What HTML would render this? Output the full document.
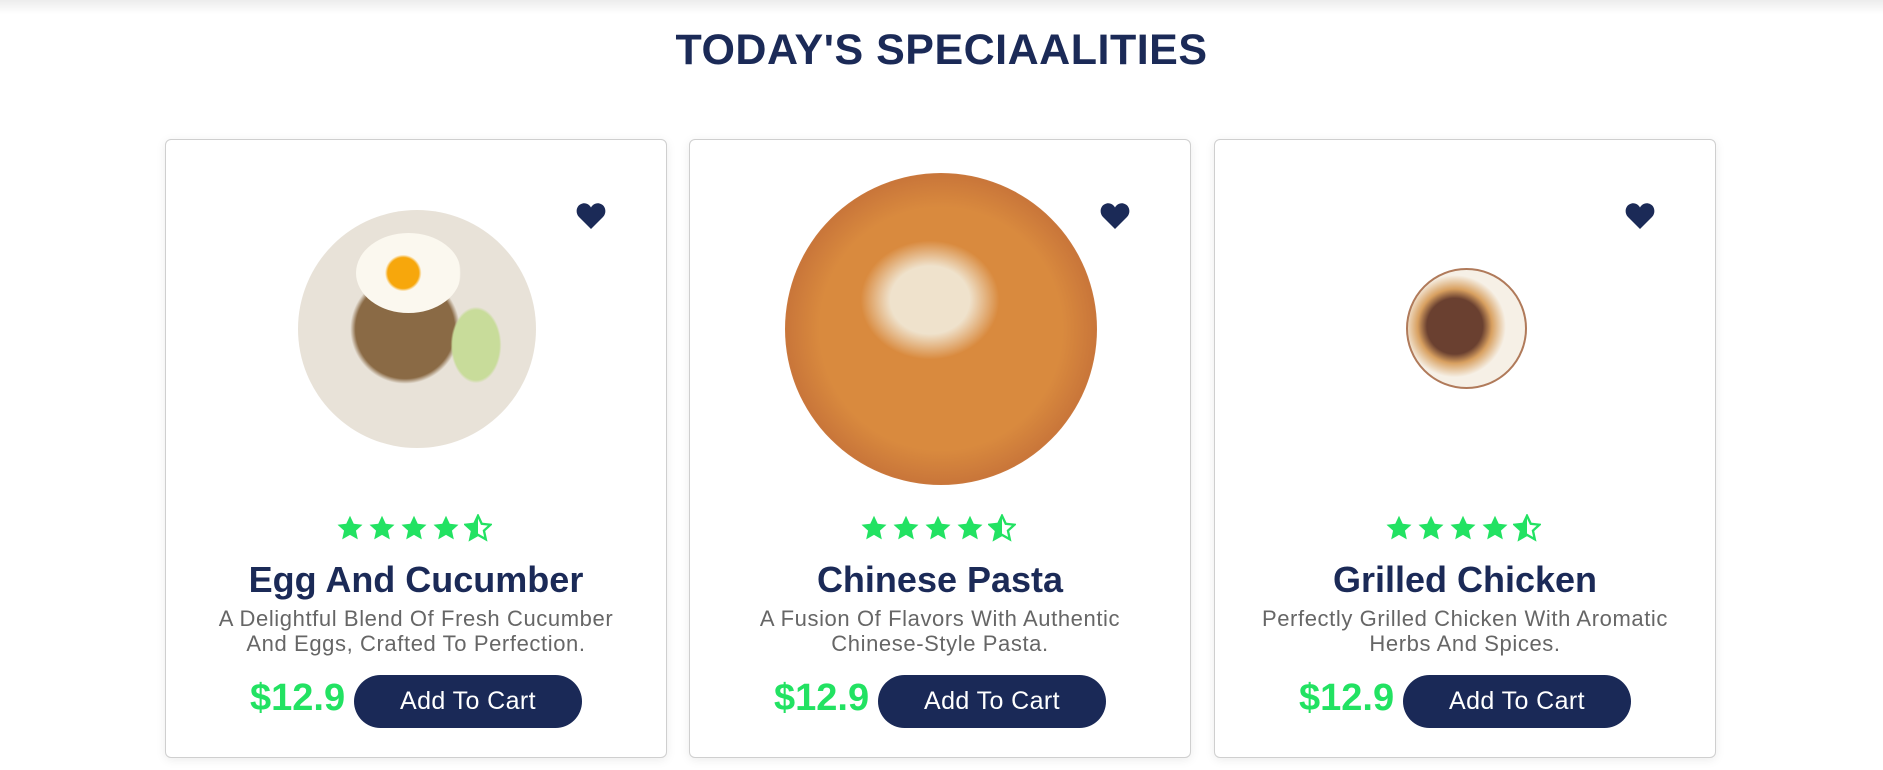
<!DOCTYPE html>
<html><head><meta charset="utf-8"><style>
*{margin:0;padding:0;box-sizing:border-box}
body{width:1883px;height:770px;background:#fff;position:relative;overflow:hidden;font-family:"Liberation Sans",sans-serif}
.top{position:absolute;left:0;top:0;width:1883px;height:14px;background:linear-gradient(#ececec,#fff)}
h1{position:absolute;left:0;width:1883px;top:26px;text-align:center;font-size:43px;font-weight:700;color:#1b2a57;letter-spacing:0.5px}
.card{position:absolute;top:139px;width:502px;height:619px;border:1px solid #cfcfcf;border-radius:6px;background:#fff;box-shadow:0 2px 10px rgba(0,0,0,.08)}
.heart{position:absolute;left:410px;top:62px;width:30px;height:28px}
.plate{position:absolute;border-radius:50%}
.stars{position:absolute;left:0;width:100%;top:374px;text-align:center;height:28px}
.name{position:absolute;left:0;width:100%;top:419px;text-align:center;font-size:36px;font-weight:700;color:#1b2a57}
.desc{position:absolute;left:0;width:100%;top:466px;text-align:center;font-size:22px;letter-spacing:0.6px;line-height:25px;color:#666}
.price{position:absolute;left:84px;top:537px;font-size:38px;font-weight:700;color:#22e262}
.btn{position:absolute;top:535px;left:188px;width:228px;height:53px;border-radius:27px;background:#1a2957;color:#fff;font-size:25px;letter-spacing:0.4px;text-align:center;line-height:53px}
</style></head><body>
<div class="top"></div>
<h1>TODAY'S SPECIAALITIES</h1>

<svg width="0" height="0" style="position:absolute"><defs>
<symbol id="st" viewBox="0 0 24 24"><path d="M12 1.5l3.2 6.9 7.5.8-5.6 5.1 1.6 7.4L12 17.9l-6.7 3.8 1.6-7.4L1.3 9.2l7.5-.8z" fill="#22e262"/></symbol>
<symbol id="hs" viewBox="0 0 24 24"><path d="M12 1.5l3.2 6.9 7.5.8-5.6 5.1 1.6 7.4L12 17.9l-6.7 3.8 1.6-7.4L1.3 9.2l7.5-.8z" fill="none" stroke="#22e262" stroke-width="2"/><path d="M12 1.5L8.8 8.4l-7.5.8 5.6 5.1-1.6 7.4L12 17.9z" fill="#22e262"/></symbol>
<symbol id="ht" viewBox="0 0 30 28"><path d="M15 27L3 15C-1 11 0 3 6.5 1.5 10.5.6 13.5 3 15 5.5 16.5 3 19.5.6 23.5 1.5 30 3 31 11 27 15z" fill="#1b2a57"/></symbol>
</defs></svg>

<!-- card 1 -->
<div class="card" style="left:165px">
<svg class="heart"><use href="#ht"/></svg>
<div class="plate" style="left:132px;top:70px;width:238px;height:238px;background:radial-gradient(circle at 45% 50%,#8a6a45 0 28%,#e8e2d8 31% 88%,#d8d0c4 96%,#fff 100%)"></div>
<div class="plate" style="left:190px;top:93px;width:105px;height:80px;background:radial-gradient(circle at 45% 50%,#f7a70c 0 22%,#fbf8ef 26% 80%,transparent 82%)"></div>
<div class="plate" style="left:280px;top:160px;width:60px;height:90px;background:radial-gradient(ellipse,#c8dc9a 0 55%,transparent 60%)"></div>
<div class="stars"><svg width="160" height="28"><use href="#st" x="0" width="28" height="28"/><use href="#st" x="32" width="28" height="28"/><use href="#st" x="64" width="28" height="28"/><use href="#st" x="96" width="28" height="28"/><use href="#hs" x="128" width="28" height="28"/></svg></div>
<div class="name">Egg And Cucumber</div>
<div class="desc">A Delightful Blend Of Fresh Cucumber<br>And Eggs, Crafted To Perfection.</div>
<div class="price">$12.9</div>
<div class="btn">Add To Cart</div>
</div>

<!-- card 2 -->
<div class="card" style="left:689px">
<svg class="heart"><use href="#ht"/></svg>
<div class="plate" style="left:95px;top:33px;width:312px;height:312px;background:radial-gradient(circle,#d98a3e 0 55%,#c9763a 70%,#d9b48c 82%,#b78d5e 98%,#fff 100%)"></div>
<div class="plate" style="left:170px;top:100px;width:140px;height:120px;background:radial-gradient(ellipse,#efe2cc 0 40%,transparent 70%)"></div>
<div class="stars"><svg width="160" height="28"><use href="#st" x="0" width="28" height="28"/><use href="#st" x="32" width="28" height="28"/><use href="#st" x="64" width="28" height="28"/><use href="#st" x="96" width="28" height="28"/><use href="#hs" x="128" width="28" height="28"/></svg></div>
<div class="name">Chinese Pasta</div>
<div class="desc">A Fusion Of Flavors With Authentic<br>Chinese-Style Pasta.</div>
<div class="price">$12.9</div>
<div class="btn">Add To Cart</div>
</div>

<!-- card 3 -->
<div class="card" style="left:1214px">
<svg class="heart"><use href="#ht"/></svg>
<div class="plate" style="left:191px;top:128px;width:121px;height:121px;border:2px solid #b07a5a;background:radial-gradient(circle at 40% 48%,#6a4030 0 30%,#d8a060 40%,#f6f0e6 55%)"></div>
<div class="stars"><svg width="160" height="28"><use href="#st" x="0" width="28" height="28"/><use href="#st" x="32" width="28" height="28"/><use href="#st" x="64" width="28" height="28"/><use href="#st" x="96" width="28" height="28"/><use href="#hs" x="128" width="28" height="28"/></svg></div>
<div class="name">Grilled Chicken</div>
<div class="desc">Perfectly Grilled Chicken With Aromatic<br>Herbs And Spices.</div>
<div class="price">$12.9</div>
<div class="btn">Add To Cart</div>
</div>
</body></html>
